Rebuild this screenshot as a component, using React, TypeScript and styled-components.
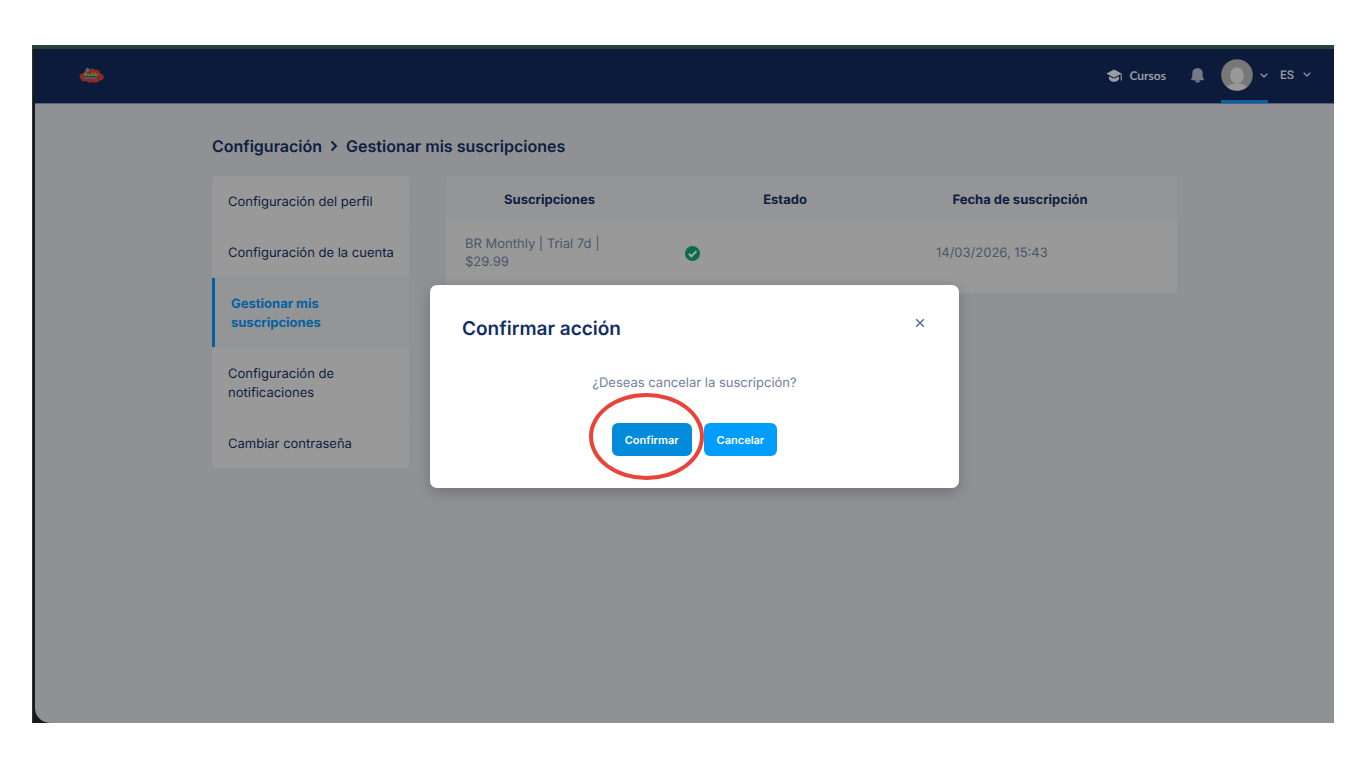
import React from 'react';
import styled, { createGlobalStyle } from 'styled-components';

const color = {
  navy: '#0c1b3c',
  ink: '#0d1d40',
  page: '#8f9195',
  card: '#999999',
  cardAlt: '#939597',
  line: '#929496',
  muted: '#4b566b',
  nav: '#999ca3',
  blueDim: '#0760a0',
  blue: '#009dff',
  blueDark: '#028bdb',
  ring: '#e8443a',
};

const GlobalStyle = createGlobalStyle`
  *, *::before, *::after { box-sizing: border-box; }
  body { margin: 0; background: #ffffff; font-family: Inter, "Liberation Sans", sans-serif; color: ${color.ink}; text-rendering: geometricPrecision; }
  button, select { font: inherit; color: inherit; border: 0; padding: 0; background: none; cursor: pointer; text-rendering: inherit; }
  a { color: inherit; text-decoration: none; }
  svg { display: block; flex: none; }
`;

const Canvas = styled.div`
  min-height: 100vh;
  padding: 45px 32px;
  display: flex;
`;

const Frame = styled.div`
  position: relative;
  flex: 1;
  min-width: 0;
  display: flex;
  flex-direction: column;
  border-top: 4px solid #27443b;
  padding-left: 3px;
  background: linear-gradient(90deg, #303336 0, #303336 1px, #17191b 1px);
`;

const Screen = styled.div`
  flex: 1;
  display: flex;
  flex-direction: column;
  background: ${color.page};
  border-bottom-left-radius: 15px;
  overflow: hidden;
`;

const Header = styled.header`
  height: 55px;
  display: flex;
  align-items: center;
  padding: 0 23px 0 44px;
  background: ${color.navy};
  border-bottom: 1px solid #56607a;
  color: ${color.nav};
`;

const Brand = styled.a`
  padding-bottom: 1px;
  margin-right: auto;
`;

const CoursesLink = styled.a`
  display: flex;
  align-items: center;
  gap: 6px;
  font: 700 12px/16px Lato, sans-serif;
  margin-right: 25px;
`;

const BellButton = styled.button`
  padding-bottom: 2px;
  margin-right: 17px;
`;

const UserButton = styled.button`
  align-self: stretch;
  display: flex;
  align-items: center;
  gap: 7px;
  padding-top: 1px;
  border-bottom: 3px solid ${color.blueDim};
`;

const Language = styled.label`
  display: flex;
  align-items: center;
  padding-bottom: 3px;
  margin-left: 12px;

  select {
    appearance: none;
    width: 31px;
    font: 500 12px/16px Roboto, sans-serif;
    outline: none;
  }
  svg {
    margin-left: -8px;
    pointer-events: none;
  }
`;

const Main = styled.main`
  padding-left: 20px;
`;

const Content = styled.div`
  max-width: 965px;
  margin: 0 auto;
  padding-top: 31px;
`;

const Breadcrumb = styled.nav`
  display: flex;
  align-items: center;
  gap: 8px;
  font-size: 16px;
  line-height: 22px;
  font-weight: 600;
`;

const Columns = styled.div`
  display: grid;
  grid-template-columns: 197px minmax(0, 1fr);
  gap: 37px;
  align-items: start;
  margin-top: 19px;
`;

const Sidebar = styled.nav`
  border-radius: 4px;
  overflow: hidden;
  background: ${color.card};
`;

const SideLink = styled.a<{ $active?: boolean }>`
  display: block;
  padding: 17px 12px 14px 16px;
  font-size: 13px;
  line-height: 19px;
  border-bottom: 1px solid ${color.line};
  ${({ $active }) =>
    $active &&
    `
    color: ${color.blueDim};
    font-weight: 700;
    background: ${color.cardAlt};
    box-shadow: inset 3px 0 ${color.blueDim};
    padding-left: 19px;
    padding-right: 48px;
  `}
  &:last-child { border-bottom: 0; }
`;

const Table = styled.table`
  width: 100%;
  table-layout: fixed;
  border-collapse: separate;
  border-spacing: 0;
  border-radius: 4px;
  overflow: hidden;
  background: ${color.card};
  font-size: 13px;
  line-height: 18px;
`;

const HeadCell = styled.th<{ $width?: number }>`
  width: ${({ $width }) => ($width ? `${$width}px` : 'auto')};
  height: 45px;
  padding: 2px 0 0;
  font-weight: 700;
  background: ${color.cardAlt};
`;

const Cell = styled.td<{ $inset?: number }>`
  height: 72px;
  padding: 0 32px 8px ${({ $inset = 19 }) => $inset}px;
  color: ${color.muted};
`;

const Backdrop = styled.div`
  position: absolute;
  inset: 0;
  display: flex;
  align-items: flex-start;
  justify-content: center;
  padding: 236px 16px 0 39px;
`;

const Modal = styled.section`
  width: 529px;
  padding: 32px;
  border-radius: 7px;
  background: #ffffff;
  box-shadow: 0 4px 14px rgba(0, 0, 0, 0.22);
`;

const ModalHead = styled.div`
  display: flex;
  align-items: flex-start;
  justify-content: space-between;
`;

const ModalTitle = styled.h2`
  margin: 0;
  font-size: 19px;
  line-height: 24px;
  font-weight: 600;
  color: #142f66;
`;

const Question = styled.p`
  margin: 33px 0 31px;
  text-align: center;
  font-size: 13px;
  line-height: 18px;
  color: #70809d;
`;

const Actions = styled.div`
  display: flex;
  justify-content: center;
  gap: 12px;
`;

const ActionButton = styled.button<{ $dark?: boolean }>`
  height: 33px;
  padding: 0 13px;
  border-radius: 6px;
  background: ${({ $dark }) => ($dark ? color.blueDark : color.blue)};
  color: #ffffff;
  font-size: 11px;
  line-height: 16px;
  font-weight: 600;
`;

const Highlighted = styled.div`
  position: relative;
  display: flex;
`;

const Ring = styled.span`
  position: absolute;
  inset: -30px -12px -24px -23px;
  border: 4px solid ${color.ring};
  border-radius: 50%;
  pointer-events: none;
`;

const CloseButton = styled.button`
  padding: 1px 2px;
  color: #607196;
`;

const Chevron = () => (
  <svg width="8" height="5" viewBox="0 0 8 5" fill="none" stroke={color.nav} strokeWidth="1.1" strokeLinecap="round" strokeLinejoin="round" aria-hidden="true">
    <path d="M1 1l3 3 3-3" />
  </svg>
);

const Logo = () => (
  <svg width="25" height="17" viewBox="0 0 25 17" role="img" aria-label="Buddy">
    <path d="M1 9c0-2 2-3 4-3 0-3 3-4 5-3 2-2 5-2 6 0 3-1 5 1 5 3 2 1 4 2 4 4s-2 3-5 4c-1 2-4 2-6 1-2 1-5 1-7-1-3 1-5 0-5-2C0 11 0 10 1 9z" fill="#8e2925" />
    <circle cx="8.5" cy="3" r="2" fill="#536675" />
    <path d="M5 8.5l2-3 11 .5 2 4-3 1.500H5z" fill="#303b45" />
    <text x="5" y="9" fontFamily="Lato, sans-serif" fontWeight="900" fontSize="5" fill="#998c28">Buddy</text>
    <path d="M5 11h13" stroke="#687584" strokeWidth="1.200" />
  </svg>
);

const CapIcon = () => (
  <svg width="17" height="14" viewBox="0 0 17 14" fill="currentColor" aria-hidden="true">
    <path d="M8 .4L.3 4.600 8 8.800l7.800-4.200z" />
    <path d="M3 7.300v2.900c1.200 1.700 3 2.600 5 2.600s3.800-.9 5-2.600V7.300L9.700 9.100c-1 .6-2.400.6-3.400 0z" />
    <path d="M15.200 5v6.500" stroke="currentColor" strokeWidth="1.100" />
  </svg>
);

const BellIcon = () => (
  <svg width="13" height="15" viewBox="0 0 13 15" fill="#737986" aria-hidden="true">
    <path d="M6.500.3C3.600.3 1.300 2.300 1.300 5v3.800L.2 10.900c-.3.700 0 1.300.8 1.300h11c.8 0 1.100-.6.8-1.300l-1.100-2.100V5c0-2.700-2.300-4.700-5.200-4.700zM3.800 12h5.400c0 1.800-1.100 2.600-2.700 2.600S3.800 13.800 3.800 12z" />
  </svg>
);

const Avatar = () => (
  <svg width="32" height="32" viewBox="0 0 32 32" aria-hidden="true">
    <defs>
      <clipPath id="avatar-clip"><circle cx="16" cy="16" r="15.500" /></clipPath>
    </defs>
    <circle cx="16" cy="16" r="15.800" fill="#777777" />
    <g fill="#999999" clipPath="url(#avatar-clip)">
      <ellipse cx="16" cy="16.500" rx="6.800" ry="8" />
      <path d="M4 33c0-5 5-8 9-8.500h6c4 .5 9 3.500 9 8.500z" />
    </g>
  </svg>
);

const CheckIcon = () => (
  <svg width="15" height="15" viewBox="0 0 15 15" role="img" aria-label="Activa">
    <circle cx="7.500" cy="7.500" r="7.500" fill="#0d6b4c" />
    <path d="M3.800 7.800l2.600 2.500 5-5" fill="none" stroke="#a0a8a4" strokeWidth="2" />
  </svg>
);

const links = [
  { label: 'Configuración del perfil' },
  { label: 'Configuración de la cuenta' },
  { label: 'Gestionar mis suscripciones', active: true },
  { label: 'Configuración de notificaciones' },
  { label: 'Cambiar contraseña' },
];

export default function App() {
  return (
    <>
      <GlobalStyle />
      <Canvas>
        <Frame>
          <Screen>
            <Header>
              <Brand href="#"><Logo /></Brand>
              <CoursesLink href="#"><CapIcon />Cursos</CoursesLink>
              <BellButton aria-label="Notificaciones"><BellIcon /></BellButton>
              <UserButton aria-label="Menú de usuario"><Avatar /><Chevron /></UserButton>
              <Language>
                <select aria-label="Idioma" defaultValue="ES">
                  <option>ES</option>
                </select>
                <Chevron />
              </Language>
            </Header>
            <Main>
              <Content>
                <Breadcrumb aria-label="Ruta">
                  <a href="#">Configuración</a>
                  <svg width="8" height="12" viewBox="0 0 8 12" fill="none" stroke={color.ink} strokeWidth="2" aria-hidden="true">
                    <path d="M1.500 1.500L6 6l-4.500 4.500" />
                  </svg>
                  <span>Gestionar mis suscripciones</span>
                </Breadcrumb>
                <Columns>
                  <Sidebar>
                    {links.map(({ label, active }) => (
                      <SideLink key={label} href="#" $active={active}>{label}</SideLink>
                    ))}
                  </Sidebar>
                  <Table>
                    <thead>
                      <tr>
                        <HeadCell $width={207}>Suscripciones</HeadCell>
                        <HeadCell $width={264}>Estado</HeadCell>
                        <HeadCell $width={206}>Fecha de suscripción</HeadCell>
                        <HeadCell aria-hidden="true" />
                      </tr>
                    </thead>
                    <tbody>
                      <tr>
                        <Cell>BR Monthly | Trial 7d | $29.99</Cell>
                        <Cell $inset={32}><CheckIcon /></Cell>
                        <Cell>14/03/2026, 15:43</Cell>
                        <Cell />
                      </tr>
                    </tbody>
                  </Table>
                </Columns>
              </Content>
            </Main>
          </Screen>
          <Backdrop>
            <Modal role="dialog" aria-modal="true" aria-labelledby="modal-title">
              <ModalHead>
                <ModalTitle id="modal-title">Confirmar acción</ModalTitle>
                <CloseButton aria-label="Cerrar">
                  <svg width="10" height="10" viewBox="0 0 10 10" fill="none" stroke="currentColor" strokeWidth="1.600" aria-hidden="true">
                    <path d="M1.200 1.200l7.600 7.600M8.800 1.200L1.200 8.800" />
                  </svg>
                </CloseButton>
              </ModalHead>
              <Question>¿Deseas cancelar la suscripción?</Question>
              <Actions>
                <Highlighted>
                  <ActionButton $dark>Confirmar</ActionButton>
                  <Ring />
                </Highlighted>
                <ActionButton>Cancelar</ActionButton>
              </Actions>
            </Modal>
          </Backdrop>
        </Frame>
      </Canvas>
    </>
  );
}
